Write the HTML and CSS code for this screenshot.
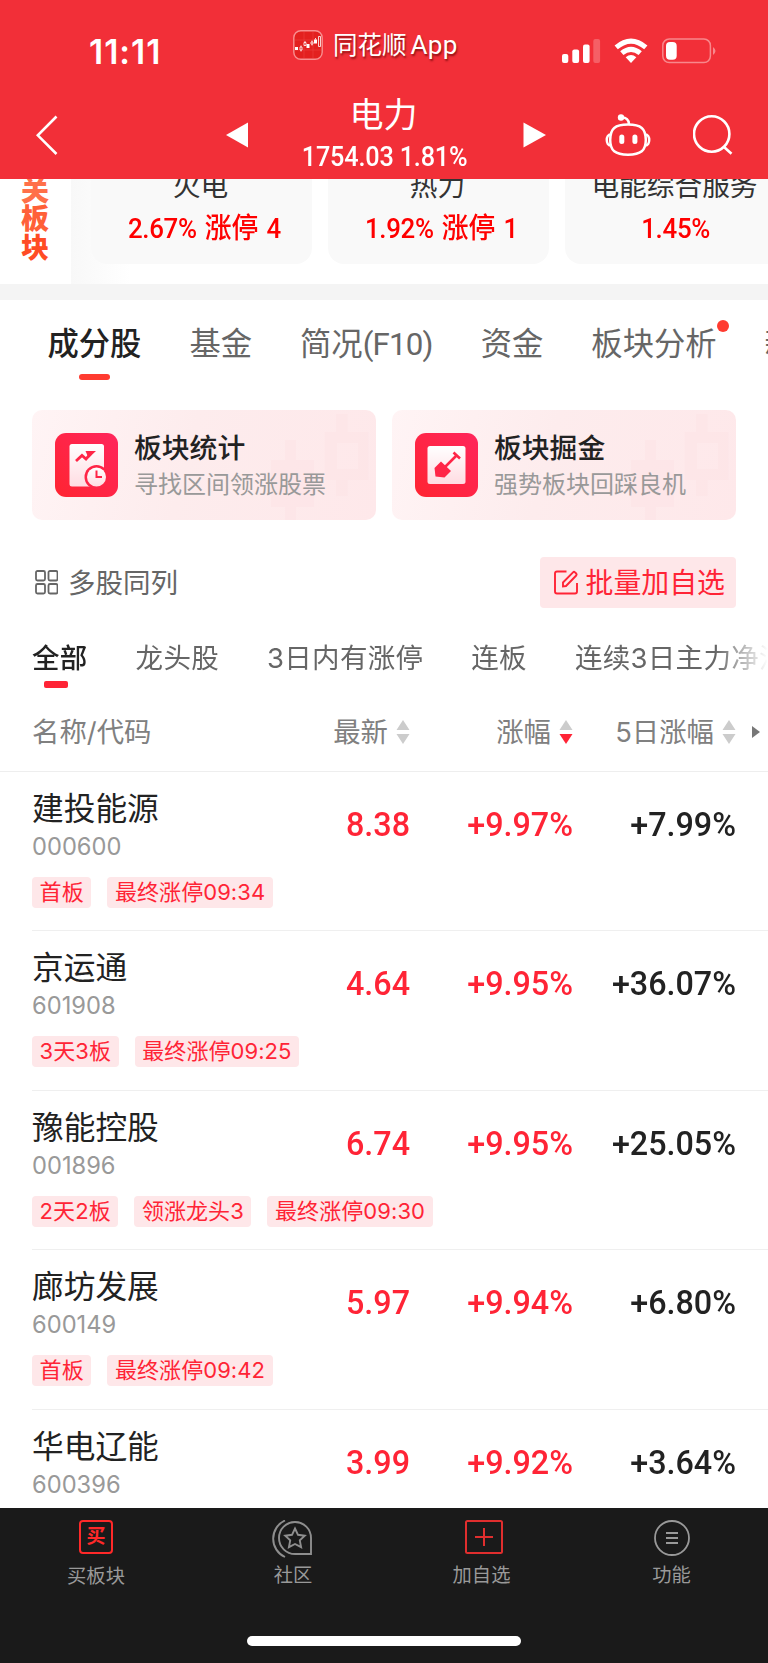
FILE: index.html
```html
<!DOCTYPE html>
<html lang="zh-CN">
<head>
<meta charset="utf-8">
<title>电力</title>
<link rel="stylesheet" href="styles.css">
</head>
<body>
<div class="app">
  <header class="header">
    <div class="status">
      <span class="time">11:11</span>
      <div class="brand">
        <svg class="brand-icon" viewBox="0 0 30 30"><rect x=".8" y=".8" width="28.4" height="28.4" rx="7" fill="#e3201f" stroke="#f88f90" stroke-width="1.4"/><path d="M2 10H28M2 20H28M11 2V28M20 2V28" stroke="#ee4444" stroke-width=".5"/><path d="M2 17h3v3H2zM13.5 14h3v4h-3zM21 9.500h3v4h-3z" fill="#fff"/><path d="M7 17h2v3H7zM11 12.500h2v3h-2zM18 12h2v2h-2zM25.500 6.500h2v10h-2zM8 15.500v1.500M8 20v1.500M12 11v1.500M19 10.500v1.500M19 14v1.500M22.500 8v1.500" fill="none" stroke="#fff" stroke-width=".8"/></svg>
        <span class="brand-name">同花顺<span class="latin">App</span></span>
      </div>
      <div class="device">
        <svg width="40" height="26" viewBox="0 0 40 26"><g fill="#fff"><rect x="1" y="16" width="6.300" height="9" rx="2"/><rect x="11.300" y="11.500" width="6.800" height="13.500" rx="2"/><rect x="22" y="6.500" width="6.600" height="18.500" rx="2"/><rect x="32.300" y="1" width="6.800" height="24" rx="2" opacity=".23"/></g></svg>
        <svg class="wifi" width="34" height="26" viewBox="0 0 34 26"><g fill="none" stroke="#fff" stroke-width="5"><path d="M2.200 9.300Q17 -3.200 31.800 9.300"/><path d="M7.800 15.200Q17 7.400 26.200 15.200"/></g><path d="M11.700 19.200Q17 15 22.300 19.200L17 25z" fill="#fff"/></svg>
        <svg width="54" height="26" viewBox="0 0 54 26"><rect x=".8" y="1" width="47.600" height="23.600" rx="6.500" fill="none" stroke="#f8888c" stroke-width="1.500"/><rect x="4" y="4" width="10.700" height="17.800" rx="4" fill="#fff"/><path d="M51 9q5 4 0 8z" fill="#f8888c"/></svg>
      </div>
    </div>
    <div class="nav">
      <svg class="back" width="24" height="42" viewBox="0 0 24 42"><path d="M20.500 2.500L1.800 21.300L20.500 40" fill="none" stroke="#fff" stroke-width="2.600"/></svg>
      <svg class="prev" width="22" height="26" viewBox="0 0 22 26"><path d="M0 13L22 .5V25.500z" fill="#fff"/></svg>
      <div class="title"><h1>电力</h1><p>1754.03 1.81%</p></div>
      <svg class="next" width="23" height="26" viewBox="0 0 23 26"><path d="M23 13L.5 .5V25.500z" fill="#fff"/></svg>
      <svg class="robot" width="46" height="42" viewBox="0 0 46 42"><g fill="none" stroke="#fff" stroke-width="2.500"><path d="M5.200 26C5.200 14.500 10 10.500 23 10.500S40.800 14.500 40.800 26C40.800 36.500 36 40.700 23 40.700S5.200 36.500 5.200 26z"/><path d="M5.700 20.500C.5 20.500 .5 31.500 5.700 31.500M40.300 20.500C45.500 20.500 45.500 31.500 40.300 31.500M24 10C23.500 5 20.500 3.500 17 3.500"/></g><circle cx="16" cy="3.500" r="3.200" fill="#fff"/><rect x="14.300" y="20.500" width="5" height="9.500" rx="2.500" fill="#fff"/><rect x="27.400" y="20.500" width="5" height="9.500" rx="2.500" fill="#fff"/></svg>
      <svg class="search" width="40" height="40" viewBox="0 0 40 40"><g fill="none" stroke="#fff" stroke-width="2.600"><circle cx="18.700" cy="19" r="17.700"/><path d="M31 32L38.500 38.800"/></g></svg>
    </div>
  </header>

  <section class="related">
    <div class="related-label"><span>关</span><span>板</span><span>块</span></div>
    <div class="related-list">
      <div class="related-card"><b>火电</b><em>2.67% <i>涨停</i> 4</em></div>
      <div class="related-card"><b>热力</b><em>1.92% <i>涨停</i> 1</em></div>
      <div class="related-card"><b>电能综合服务</b><em class="single">1.45%</em></div>
    </div>
  </section>

  <nav class="tabs">
    <span class="tab active">成分股</span><span class="tab">基金</span><span class="tab">简况<i>(F10)</i></span><span class="tab">资金</span><span class="tab dotted">板块分析</span><span class="tab">新闻</span>
  </nav>

  <section class="tools">
    <div class="tool">
      <svg class="candles" width="100" height="110" viewBox="0 0 100 110"><g fill="#fde0e3"><path d="M54.700 22H66V4h11.500v18h20.800v48H77.500v16H66V70H54.700zM67 33v26h21V33z" fill-rule="evenodd" opacity=".4"/><path d="M1 50h14V30h11v20h18v47H26v13H15V97H1z" opacity=".35"/></g></svg>
      <svg class="tool-icon" viewBox="0 0 63 64"><defs><linearGradient id="red" x1="1" y1="0" x2="0" y2="1"><stop stop-color="#ff265c"/><stop offset="1" stop-color="#ff2431"/></linearGradient><linearGradient id="paper" x1="0" y1="0" x2="0" y2="1"><stop stop-color="#fff"/><stop offset="1" stop-color="#ffdce2"/></linearGradient></defs><rect width="63" height="64" rx="11" fill="url(#red)"/><rect x="14.500" y="11" width="34.500" height="42.500" rx="2.500" fill="url(#paper)"/><path d="M21 28L27 22.500L31 26L36 20.500" fill="none" stroke="#ff2547" stroke-width="2.800"/><path d="M30.500 18H41L33.500 25z" fill="#ff2547"/><circle cx="41.500" cy="44" r="12" fill="#ff2547"/><circle cx="41.500" cy="44" r="9.500" fill="url(#paper)"/><path d="M41.500 37.500V44H47" fill="none" stroke="#ff2547" stroke-width="2"/></svg>
      <div class="tool-text"><b>板块统计</b><span>寻找区间领涨股票</span></div>
    </div>
    <div class="tool">
      <svg class="candles" width="100" height="110" viewBox="0 0 100 110"><g fill="#fde0e3"><path d="M54.700 22H66V4h11.500v18h20.800v48H77.500v16H66V70H54.700zM67 33v26h21V33z" fill-rule="evenodd" opacity=".4"/><path d="M1 50h14V30h11v20h18v47H26v13H15V97H1z" opacity=".35"/></g></svg>
      <svg class="tool-icon" viewBox="0 0 63 64"><rect width="63" height="64" rx="11" fill="url(#red)"/><rect x="12.500" y="13" width="38" height="38" rx="2.500" fill="url(#paper)"/><path d="M30 34L42 22M38.500 19.500L45 25.500" fill="none" stroke="#ff2547" stroke-width="2.600"/><path d="M26 28.500L36 38L29.500 44.500L20.500 43.500L19.500 35z" fill="#ff2547"/></svg>
      <div class="tool-text"><b>板块掘金</b><span>强势板块回踩良机</span></div>
    </div>
  </section>

  <div class="actions">
    <div class="multi"><svg width="24" height="25" viewBox="0 0 24 25"><g fill="none" stroke="#666" stroke-width="1.800"><rect x="2" y="1" width="9" height="9.500" rx="1.500"/><rect x="14.500" y="1" width="9" height="9.500" rx="1.500"/><rect x="2" y="14" width="9" height="9.500" rx="1.500"/><rect x="14.500" y="14" width="9" height="9.500" rx="1.500"/></g></svg><span>多股同列</span></div>
    <div class="batch"><svg width="24" height="25" viewBox="0 0 24 25"><g fill="none" stroke="#ff2436" stroke-width="1.900"><path d="M12.500 1.500H3Q1 1.500 1 3.500V21.500Q1 23.500 3 23.500H21Q23 23.500 23 21.500V13"/><path d="M9 16.500V12.500L19 2.300Q20 1.300 21 2.300L22.200 3.500Q23 4.500 22.200 5.500L12 16z"/></g></svg><span>批量加自选</span></div>
  </div>

  <nav class="filters">
    <span class="filter active">全部</span><span class="filter">龙头股</span><span class="filter">3日内有涨停</span><span class="filter">连板</span><span class="filter">连续3日主力净流入</span>
  </nav>

  <div class="columns">
    <span class="col-name">名称/代码</span>
    <span class="col">最新<svg width="14" height="24" viewBox="0 0 14 24"><path d="M7 0l6.500 10H.5zM7 24l6.500-10H.5z" fill="#ccc"/></svg></span>
    <span class="col">涨幅<svg width="14" height="24" viewBox="0 0 14 24"><path d="M7 0l6.500 10H.5z" fill="#ccc"/><path d="M7 24l6.500-10H.5z" fill="#ff2436"/></svg></span>
    <span class="col">5日涨幅<svg width="14" height="24" viewBox="0 0 14 24"><path d="M7 0l6.500 10H.5zM7 24l6.500-10H.5z" fill="#ccc"/></svg></span>
    <svg class="more" width="8" height="12" viewBox="0 0 8 12"><path d="M0 0L8 6L0 12z" fill="#777"/></svg>
  </div>

  <main class="stocks">
    <article class="stock"><div class="name"><b>建投能源</b><i>000600</i></div><span class="num up">8.38</span><span class="num up">+9.97%</span><span class="num">+7.99%</span><div class="tags"><span>首板</span><span>最终涨停09:34</span></div></article>
    <article class="stock"><div class="name"><b>京运通</b><i>601908</i></div><span class="num up">4.64</span><span class="num up">+9.95%</span><span class="num">+36.07%</span><div class="tags"><span>3天3板</span><span>最终涨停09:25</span></div></article>
    <article class="stock"><div class="name"><b>豫能控股</b><i>001896</i></div><span class="num up">6.74</span><span class="num up">+9.95%</span><span class="num">+25.05%</span><div class="tags"><span>2天2板</span><span>领涨龙头3</span><span>最终涨停09:30</span></div></article>
    <article class="stock"><div class="name"><b>廊坊发展</b><i>600149</i></div><span class="num up">5.97</span><span class="num up">+9.94%</span><span class="num">+6.80%</span><div class="tags"><span>首板</span><span>最终涨停09:42</span></div></article>
    <article class="stock"><div class="name"><b>华电辽能</b><i>600396</i></div><span class="num up">3.99</span><span class="num up">+9.92%</span><span class="num">+3.64%</span></article>
  </main>

  <footer class="bottom">
    <div class="bottom-nav">
      <div class="item buy"><span class="buy-icon">买</span><span>买板块</span></div>
      <div class="item"><svg width="42" height="40" viewBox="0 0 42 40"><g fill="none" stroke="#8e8e8e" stroke-width="1.900"><path d="M13 .5A20 20 0 0 0 13 37"/><path d="M39 34V18A16 16 0 1 0 23 34z"/><path d="M23 8.500l3 6.300 6.800.9-5 4.700 1.300 6.800L23 24l-6.100 3.200 1.300-6.800-5-4.700 6.800-.9z"/></g></svg><span>社区</span></div>
      <div class="item add"><svg width="38" height="34" viewBox="0 0 38 34"><g fill="none" stroke="#e02e2e" stroke-width="2"><rect x="1" y="1" width="36" height="32" rx="1.500"/><path d="M10 17H28M19 8V26"/></g></svg><span>加自选</span></div>
      <div class="item"><svg width="36" height="36" viewBox="0 0 36 36"><g fill="none" stroke="#999" stroke-width="1.800"><circle cx="18" cy="18" r="17"/><path d="M12 13H24M12 18H24M12 23H24"/></g></svg><span>功能</span></div>
    </div>
    <div class="home"></div>
  </footer>
</div>
</body>
</html>
```
FILE: styles.css
```css
* { box-sizing: border-box; }
body { margin: 0; background: #fff; font-family: Roboto, "Noto Sans CJK SC", sans-serif; color: #222; }
b, i, em, h1, p { margin: 0; font-style: normal; font-weight: 400; }
svg { display: block; flex: none; }
.app { width: 768px; height: 1663px; overflow: hidden; display: flex; flex-direction: column; white-space: nowrap; }
.app > * { flex: none; }

.header { height: 179px; background: #f22f38; color: #fff; }
.status { height: 90px; padding: 25px 0 0 89px; display: grid; grid-template-columns: 204px 268px 160px; align-items: start; }
.time { font: 600 33.500px/54px Inter, sans-serif; letter-spacing: 1px; }
.brand { display: flex; height: 40px; align-items: center; gap: 10px; }
.brand-icon { width: 30px; height: 30px; }
.brand-name { font-size: 24.500px; line-height: 40px; text-shadow: 1px 2px 2px rgba(90,0,0,.65); }
.latin { font-size: 26px; margin-left: 4px; letter-spacing: .3px; }
.device { display: flex; align-items: center; padding-top: 13px; }
.wifi { margin: 0 14px 0 13px; }
.nav { height: 89px; display: grid; grid-template-columns: 36px 190px 77px 163px 57px 82px 88px 40px; align-items: start; }
.nav > * { margin-top: 24px; }
.nav .back { grid-column: 2; }
.nav .prev { grid-column: 3; margin-top: 32px; }
.nav .title { grid-column: 4; margin-top: 2px; display: flex; flex-direction: column; align-items: center; }
.nav .next { grid-column: 5; margin: 32px 0 0 57px; }
.nav .robot { grid-column: 6; margin-left: 82px; }
.nav .search { grid-column: 7; margin: 25px 0 0 88px; }
.title h1 { font-size: 34px; line-height: 46px; margin-left: -2px; }
.title p { font-size: 27px; font-weight: 500; line-height: 39px; letter-spacing: -.2px; transform: scaleX(.935); }

.related { height: 105px; display: flex; overflow: hidden; }
.related-label { width: 71px; padding-left: 21px; height: 84px; display: flex; flex-direction: column; justify-content: flex-end; font-size: 28px; line-height: 28.500px; }
.related-label span { font-weight: 900; color: #ff7049; }
.related-label span + span { color: #ff6038; }
.related-label span:last-child { color: #ff4c25; }
.related-list { flex: 1; padding-left: 20px; display: flex; gap: 16px; overflow: hidden; background: linear-gradient(90deg, #f8f8f8, #fff 60px); }
.related-card { flex: none; width: 221px; height: 85px; border-radius: 0 0 16px 16px; background: #f9f9f9; display: flex; flex-direction: column; align-items: center; }
.related-card b { font-size: 27.700px; line-height: 36px; margin: -10px 0 0 -2px; color: #333; }
.related-card em { font-size: 27.500px; line-height: 41px; margin: 3px 0 0 5px; font-weight: 500; color: #f00; letter-spacing: -.3px; word-spacing: 2px; transform: scaleX(.94); }
.related-card em i { font-size: 28.500px; font-weight: 500; letter-spacing: 0; }
.related-card .single { margin-left: 0; }

.tabs { height: 110px; border-top: 16px solid #f4f4f4; padding: 21px 0 0 47.500px; display: flex; gap: 48px; overflow: hidden; font-size: 31.300px; line-height: 48px; color: #666; }
.tab { position: relative; flex: none; }
.tab i { letter-spacing: -.8px; }
.active { font-weight: 500; color: #222; }
.tabs .active::after { content: ""; position: absolute; left: 31.500px; top: 53px; width: 31px; height: 6px; border-radius: 3px; background: #ff3b30; }
.dotted::after { content: ""; position: absolute; right: -12px; top: -1px; width: 12px; height: 12px; border-radius: 50%; background: #ff3b30; }

.tools { margin-top: 16px; height: 110px; padding: 0 32px; display: flex; gap: 16px; }
.tool { position: relative; overflow: hidden; width: 344px; height: 110px; border-radius: 10px; padding: 23px; display: flex; background: linear-gradient(105deg, #fff4f5, #fdeced 45%, #fee8ea); }
.candles { position: absolute; left: 238px; top: 0; }
.tool-icon { width: 63px; height: 64px; }
.tool-text { position: relative; margin: -4px 0 0 16px; display: flex; flex-direction: column; }
.tool-text b { font-size: 27.800px; font-weight: 500; line-height: 39px; }
.tool-text span { font-size: 24px; line-height: 35px; color: #999; }

.actions { margin-top: 37.400px; height: 52.600px; padding: 0 32px 0 34px; display: flex; justify-content: space-between; font-size: 27.500px; line-height: 51px; color: #666; }
.multi { display: flex; align-items: center; height: 51px; gap: 10px; }
.actions span { padding-top: 2px; }
.batch { width: 196.500px; height: 51px; padding-left: 14px; display: flex; align-items: center; gap: 8px; border-radius: 4px; background: #fee7e9; color: #ff2436; font-size: 27.900px; }

.filters { margin-top: 27px; height: 66px; padding-left: 32px; display: flex; gap: 48px; overflow: hidden; font: 27.500px/43px Inter, "Noto Sans CJK SC", sans-serif; letter-spacing: .3px; color: #666; -webkit-mask-image: linear-gradient(90deg, #000 715px, transparent 768px); mask-image: linear-gradient(90deg, #000 715px, transparent 768px); }
.filter { position: relative; flex: none; }
.filters .active::after { content: ""; position: absolute; left: 12px; top: 44px; width: 24px; height: 7px; border-radius: 2px; background: #ff2436; }

.columns { height: 69px; padding: 0 0 9px 32px; border-bottom: 1px solid #eee; display: grid; grid-template-columns: 217px 161px 163px 163px 8px; font: 27.400px/58px Inter, "Noto Sans CJK SC", sans-serif; color: #808080; align-items: center; }
.col { display: flex; justify-content: flex-end; align-items: center; gap: 8px; }
.more { margin-left: 16px; }

.stocks { height: 736px; overflow: hidden; }
.stock { height: 159.400px; margin-left: 32px; padding: 15px 32px 0 0; display: grid; grid-template-columns: 217.500px 160px 163px 163px; grid-template-rows: 90px 31px; align-items: start; border-bottom: 1.400px solid #efefef; }
.name { display: flex; flex-direction: column; }
.name b { font-size: 31.700px; line-height: 45px; }
.name i { font: 23.700px/30px Inter, sans-serif; color: #999; }
.num { font-size: 34px; font-weight: 500; line-height: 74px; text-align: right; color: #222; transform: scaleX(.95); transform-origin: right; }
.num.up { color: #ff2436; }
.tags { grid-column: 1 / -1; display: flex; gap: 16px; }
.tags span { height: 31px; padding: 0 7.600px; border-radius: 4px; background: #fee7e9; color: #ff2436; font: 22px/31px Inter, "Noto Sans CJK SC", sans-serif; letter-spacing: .07px; }

.bottom { height: 155px; background: #1a1a1a; }
.bottom-nav { height: 128px; display: grid; grid-template-columns: 192px 202px 175px 205px; }
.item { display: flex; flex-direction: column; align-items: center; color: #999; font-size: 19.300px; line-height: 28px; }
.item svg, .buy-icon { margin-top: 12.500px; }
.item span:last-child { margin-top: auto; margin-bottom: 46px; }
.buy span:last-child { margin-bottom: 45px; }
.buy-icon { width: 34px; height: 34px; border: 2px solid #ff2929; border-radius: 4px; color: #ff2929; font-size: 19px; font-weight: 700; line-height: 30px; text-align: center; }
.add svg { margin-left: 4px; }
.home { width: 274px; height: 10px; margin-left: 247px; border-radius: 5px; background: #fff; }
```
